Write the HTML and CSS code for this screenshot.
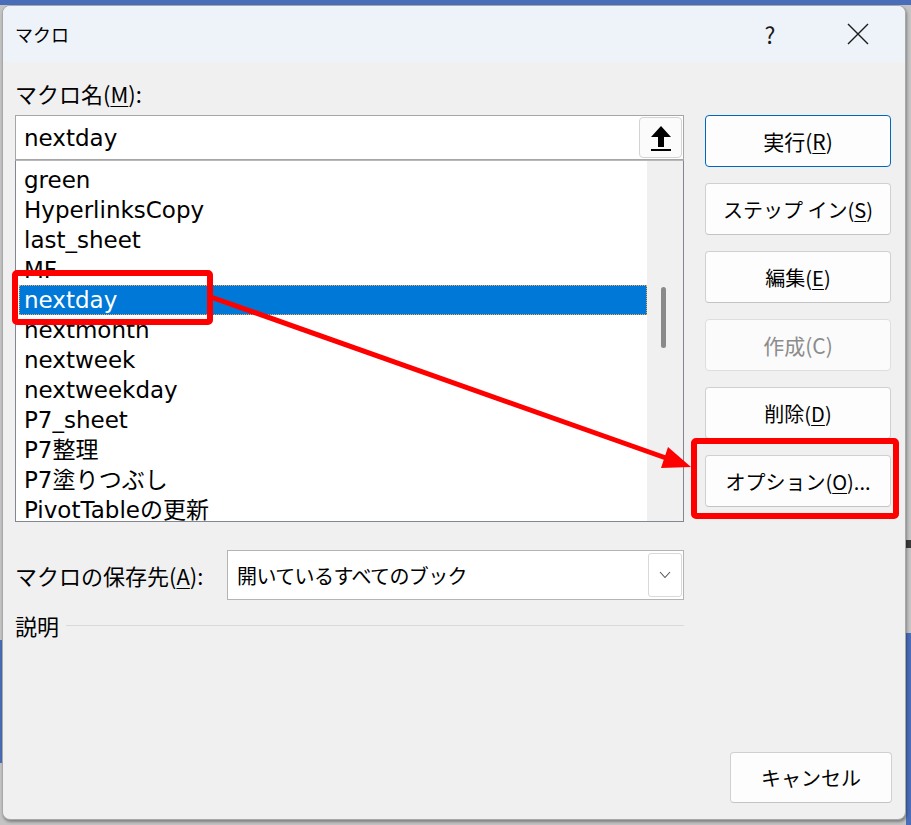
FILE: index.html
```html
<!DOCTYPE html>
<html lang="ja">
<head>
    <meta charset="UTF-8">
    <meta name="viewport" content="width=device-width, initial-scale=1.0">
    <title>マクロ</title>
    <link rel="stylesheet" href="styles.css">
</head>
<body>
<div class="screen">
    <div class="dialog">
        <div class="titlebar">
            <span class="title">マクロ</span>
            <span class="help">?</span>
            <span class="close">
                <svg width="22" height="22" viewBox="0 0 22 22">
                    <path d="M1 1 L21 21 M21 1 L1 21" stroke="#1a1a1a" stroke-width="1.4" fill="none"/>
                </svg>
            </span>
        </div>

        <div class="content">
            <div class="main">
                <div class="left">
                    <div class="label">マクロ名(<u>M</u>):</div>
                    <div class="name-box">
                        <span class="name-value">nextday</span>
                        <span class="up-btn">
                            <svg width="20" height="26" viewBox="0 0 20 26">
                                <polygon points="10,0 20,11 13,11 13,21 7,21 7,11 0,11" fill="#000"/>
                                <rect x="0" y="23" width="20" height="2" fill="#000"/>
                            </svg>
                        </span>
                    </div>
                    <div class="listbox">
                        <ul class="items">
                            <li>green</li>
                            <li>HyperlinksCopy</li>
                            <li>last_sheet</li>
                            <li>MF</li>
                            <li class="selected">nextday</li>
                            <li>nextmonth</li>
                            <li>nextweek</li>
                            <li>nextweekday</li>
                            <li>P7_sheet</li>
                            <li>P7整理</li>
                            <li>P7塗りつぶし</li>
                            <li>PivotTableの更新</li>
                        </ul>
                        <div class="scrollbar"><div class="thumb"></div></div>
                    </div>
                </div>

                <div class="buttons">
                    <button class="btn default">実行(<u>R</u>)</button>
                    <button class="btn">ステップ イン(<u>S</u>)</button>
                    <button class="btn">編集(<u>E</u>)</button>
                    <button class="btn disabled">作成(C)</button>
                    <button class="btn">削除(<u>D</u>)</button>
                    <button class="btn">オプション(<u>O</u>)...</button>
                </div>
            </div>

            <div class="store-row">
                <span class="label">マクロの保存先(<u>A</u>):</span>
                <div class="select">
                    <span class="select-value">開いているすべてのブック</span>
                    <span class="drop">
                        <svg width="12" height="8" viewBox="0 0 12 8">
                            <path d="M1 1 L6 6.5 L11 1" stroke="#555" stroke-width="1.1" fill="none"/>
                        </svg>
                    </span>
                </div>
            </div>

            <div class="desc">
                <span class="label">説明</span>
                <span class="rule"></span>
            </div>

            <div class="footer">
                <button class="btn cancel">キャンセル</button>
            </div>
        </div>
    </div>

    <!-- red callouts drawn over the dialog -->
    <svg class="marks" width="911" height="825" viewBox="0 0 911 825">
        <rect x="15" y="273" width="195" height="49" rx="2" fill="none" stroke="#ff0000" stroke-width="6"/>
        <rect x="694" y="441" width="202" height="75" rx="2" fill="none" stroke="#ff0000" stroke-width="6"/>
        <line x1="208" y1="296" x2="666" y2="458" stroke="#ff0000" stroke-width="5"/>
        <polygon points="691,467 668,447 661,468" fill="#ff0000"/>
    </svg>
</div>
</body>
</html>
```

FILE: styles.css
```css
* {
    box-sizing: border-box;
}
body {
    margin: 0;
    font-family: "Noto Sans CJK JP", "Noto Sans", sans-serif;
    color: #000;
    background:
        linear-gradient(#4a6db9, #4a6db9) 0 0 / 100% 5px no-repeat,
        linear-gradient(#4a6db9, #4a6db9) right 0 top 633px / 5px 192px no-repeat,
        linear-gradient(#3c3a38, #3c3a38) right 0 top 540px / 5px 8px no-repeat,
        linear-gradient(#4a6db9, #4a6db9) 0 640px / 2px 123px no-repeat,
        #c4c4c4;
}
.screen {
    position: relative;
    width: 911px;
    height: 825px;
    padding: 5px 5px 0 2px;
}
.dialog {
    width: 904px;
    height: 815px;
    background: #f0f0f0;
    border: 1px solid #a8a8a8;
    border-radius: 8px;
    box-shadow: 1px 2px 3px rgba(0, 0, 0, 0.35);
    display: flex;
    flex-direction: column;
    overflow: hidden;
}
u {
    text-decoration-thickness: 1px;
    text-underline-offset: 3px;
}

/* title bar */
.titlebar {
    height: 56px;
    background: #eef3fa;
    display: flex;
    align-items: center;
    padding-left: 12px;
}
.title {
    font-size: 18px;
    flex: 1;
}
.help {
    font-size: 23px;
    width: 30px;
    text-align: center;
    margin-right: 62px;
    color: #1a1a1a;
}
.close {
    width: 22px;
    height: 22px;
    margin-right: 36px;
    display: flex;
}

/* body */
.content {
    flex: 1;
    display: flex;
    flex-direction: column;
    padding: 16px 14px 16px 12px;
}
.main {
    display: grid;
    grid-template-columns: 669px 186px;
    gap: 21px;
}
.label {
    font-size: 22px;
    line-height: 30px;
    white-space: nowrap;
}
.left .label {
    margin-bottom: 7px;
}
.name-box {
    height: 45px;
    background: #fff;
    border: 1px solid #a6a6a6;
    display: flex;
    align-items: center;
    padding-left: 8px;
}
.name-value {
    flex: 1;
    font-family: "DejaVu Sans", "Noto Sans CJK JP", sans-serif;
    font-size: 23px;
}
.up-btn {
    width: 43px;
    height: 41px;
    margin-right: 1px;
    background: #fbfbfb;
    border: 1px solid #d4d4d4;
    border-radius: 4px;
    display: flex;
    align-items: center;
    justify-content: center;
    padding-top: 2px;
}

/* macro list */
.listbox {
    height: 362px;
    background: #fff;
    border: 1px solid #828790;
    border-top-color: #b8b8b8;
    display: flex;
}
.items {
    flex: 1;
    list-style: none;
    margin: 0;
    padding: 4px 0 0 3px;
    overflow: hidden;
}
.items li {
    height: 30px;
    line-height: 30px;
    padding-left: 5px;
    font-family: "DejaVu Sans", "Noto Sans CJK JP", sans-serif;
    font-size: 23px;
    white-space: nowrap;
}
.items li.selected {
    background: #0078d7;
    color: #fff;
    outline: 1px dotted #f0a850;
    outline-offset: -1px;
}
.scrollbar {
    width: 36px;
    background: #f0f0f0;
    padding: 126px 0 0 14px;
}
.thumb {
    width: 5px;
    height: 61px;
    background: #8a8a8a;
    border-radius: 3px;
}

/* command buttons */
.buttons {
    display: flex;
    flex-direction: column;
    gap: 16px;
    margin-top: 37px;
}
.btn {
    height: 52px;
    font-family: "Noto Sans CJK JP", sans-serif;
    font-size: 20px;
    color: #000;
    background: #fdfdfd;
    border: 1px solid #d0d0d0;
    border-bottom-color: #c4c4c4;
    border-radius: 4px;
    padding: 0;
}
.btn.default {
    border: 1px solid #0067c0;
    font-size: 21px;
}
.btn.disabled {
    color: #8c8c8c;
    background: #fbfbfb;
    border-color: #dedede;
    font-size: 21px;
}

/* storage row */
.store-row {
    display: flex;
    align-items: center;
    margin-top: 28px;
    width: 669px;
}
.select {
    margin-left: auto;
    width: 457px;
    height: 50px;
    background: #fff;
    border: 1px solid #b4b4b4;
    display: flex;
    align-items: center;
    padding-left: 9px;
}
.select-value {
    flex: 1;
    font-size: 20px;
    letter-spacing: -0.6px;
}
.drop {
    width: 34px;
    height: 44px;
    margin-right: 1px;
    border: 1px solid #d9d9d9;
    border-radius: 3px;
    display: flex;
    align-items: center;
    justify-content: center;
}

/* description */
.desc {
    display: flex;
    align-items: center;
    width: 669px;
    margin-top: 10px;
}
.rule {
    flex: 1;
    height: 1px;
    background: #dadada;
    margin-left: 7px;
}

/* footer */
.footer {
    margin-top: auto;
    display: flex;
    justify-content: flex-end;
    margin-right: -1px;
}
.btn.cancel {
    width: 162px;
    height: 51px;
}

.marks {
    position: absolute;
    top: 0;
    left: 0;
    pointer-events: none;
}
```
